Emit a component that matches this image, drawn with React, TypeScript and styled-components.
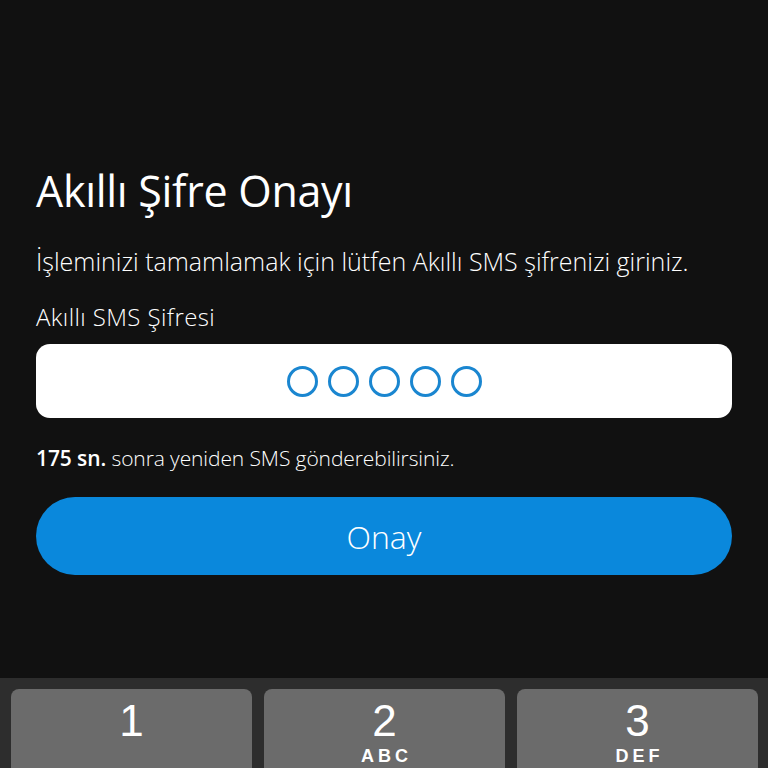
import React from 'react';
import styled, { createGlobalStyle } from 'styled-components';

const GlobalStyle = createGlobalStyle`
  html, body {
    margin: 0;
    padding: 0;
    background: #111111;
  }
  body {
    font-family: "Open Sans", "Noto Sans", sans-serif;
    color: #ffffff;
  }
`;

const Screen = styled.div`
  width: 768px;
  height: 768px;
  overflow: hidden;
  display: flex;
  flex-direction: column;
  background: #111111;
`;

const Content = styled.main`
  flex: 1;
  padding: 165px 36px 0;
  display: flex;
  flex-direction: column;
`;

const Title = styled.h1`
  margin: 0;
  font-size: 43px;
  font-weight: 400;
  line-height: 52px;
  letter-spacing: -0.3px;
`;

const Description = styled.p`
  margin: 28px 0 0;
  font-size: 25px;
  font-weight: 300;
  line-height: 32px;
`;

const FieldLabel = styled.label`
  margin-top: 25px;
  font-size: 24px;
  font-weight: 300;
  line-height: 30px;
  letter-spacing: 0.4px;
`;

const CodeBox = styled.div`
  margin-top: 12px;
  height: 74px;
  border-radius: 14px;
  background: #ffffff;
  display: flex;
  align-items: center;
  justify-content: center;
  gap: 10px;
`;

const Dot = styled.span`
  width: 25px;
  height: 25px;
  border-radius: 50%;
  border: 3px solid #1a86d0;
`;

const Hint = styled.p`
  margin: 26px 0 0;
  font-size: 21px;
  font-weight: 300;
  line-height: 28px;
  letter-spacing: -0.1px;

  strong {
    font-weight: 600;
  }
`;

const ConfirmButton = styled.button`
  margin-top: 25px;
  height: 78px;
  border: none;
  border-radius: 39px;
  background: #0a88dc;
  color: #ffffff;
  font-family: "Open Sans", "Noto Sans", sans-serif;
  font-size: 32px;
  font-weight: 300;
  cursor: pointer;
`;

const Keypad = styled.div`
  box-sizing: border-box;
  height: 90px;
  background: #2d2d2d;
  padding: 11px 10px 0 11px;
  display: grid;
  grid-template-columns: repeat(3, 1fr);
  gap: 12px;
`;

const Key = styled.div`
  background: #6b6b6b;
  border-radius: 8px 8px 0 0;
  display: flex;
  flex-direction: column;
  align-items: center;
  padding-top: 10px;
  font-family: "Liberation Sans", Roboto, sans-serif;
`;

const Digit = styled.span`
  font-size: 44px;
  line-height: 44px;
`;

const Letters = styled.span`
  margin-top: 3px;
  margin-left: 4px;
  font-size: 18px;
  font-weight: 700;
  letter-spacing: 4px;
  line-height: 20px;
`;

const keys = [
  { digit: '1', letters: '' },
  { digit: '2', letters: 'ABC' },
  { digit: '3', letters: 'DEF' },
];

const App: React.FC = () => (
  <>
    <GlobalStyle />
    <Screen>
      <Content>
        <Title>Akıllı Şifre Onayı</Title>
        <Description>
          İşleminizi tamamlamak için lütfen Akıllı SMS şifrenizi giriniz.
        </Description>
        <FieldLabel>Akıllı SMS Şifresi</FieldLabel>
        <CodeBox>
          {[0, 1, 2, 3, 4].map((i) => (
            <Dot key={i} />
          ))}
        </CodeBox>
        <Hint>
          <strong>175 sn.</strong> sonra yeniden SMS gönderebilirsiniz.
        </Hint>
        <ConfirmButton>Onay</ConfirmButton>
      </Content>
      <Keypad>
        {keys.map((k) => (
          <Key key={k.digit}>
            <Digit>{k.digit}</Digit>
            {k.letters && <Letters>{k.letters}</Letters>}
          </Key>
        ))}
      </Keypad>
    </Screen>
  </>
);

export default App;
